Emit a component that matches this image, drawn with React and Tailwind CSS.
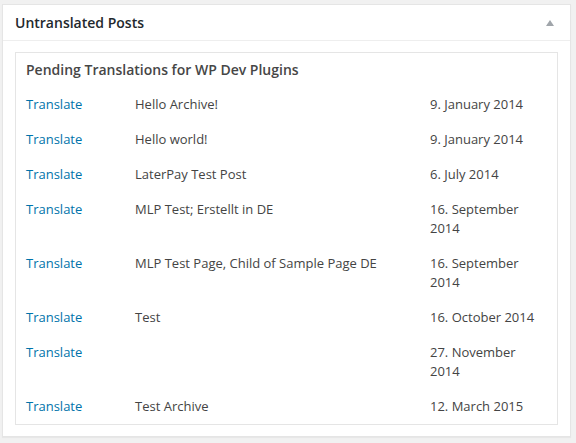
const rows = [
  { title: "Hello Archive!", date: "9. January 2014" },
  { title: "Hello world!", date: "9. January 2014" },
  { title: "LaterPay Test Post", date: "6. July 2014" },
  { title: "MLP Test; Erstellt in DE", date: "16. September 2014" },
  { title: "MLP Test Page, Child of Sample Page DE", date: "16. September 2014" },
  { title: "Test", date: "16. October 2014" },
  { title: "", date: "27. November 2014" },
  { title: "Test Archive", date: "12. March 2015" },
];

export default function App() {
  return (
    <div
      className="min-h-[443px] bg-[#f1f1f1] pt-[4px] pl-[2px] pr-[5px]"
      style={{ fontFamily: '"Open Sans", "Noto Sans", sans-serif' }}
    >
      {/* metabox */}
      <div className="bg-white border border-[#e5e5e5] shadow-[0_1px_1px_rgba(0,0,0,0.04)]">
        <div className="h-[36px] flex items-center justify-between px-3 border-b border-[#eeeeee]">
          <h2 className="text-[14px] font-semibold text-[#23282d] leading-[19px]">
            Untranslated Posts
          </h2>
          <svg width="8" height="6" viewBox="0 0 8 6" className="mr-[4px]">
            <path d="M4 0 L8 6 L0 6 Z" fill="#a0a5aa" />
          </svg>
        </div>

        <div className="px-3 pt-[11px] pb-[11px]">
          <div className="border border-[#e5e5e5] px-[10px]">
            <h3 className="pt-[7px] mb-[8px] text-[14px] leading-[19px] font-semibold text-[#464646]">
              Pending Translations for WP Dev Plugins
            </h3>
            <div className="text-[13px] leading-[19px] text-[#444]">
              {rows.map((r, i) => (
                <div key={i} className="grid grid-cols-[109px_295px_1fr] py-2">
                  <a href="#" className="text-[#0073aa]">Translate</a>
                  <span>{r.title}</span>
                  <span>{r.date}</span>
                </div>
              ))}
            </div>
          </div>
        </div>
      </div>
    </div>
  );
}
